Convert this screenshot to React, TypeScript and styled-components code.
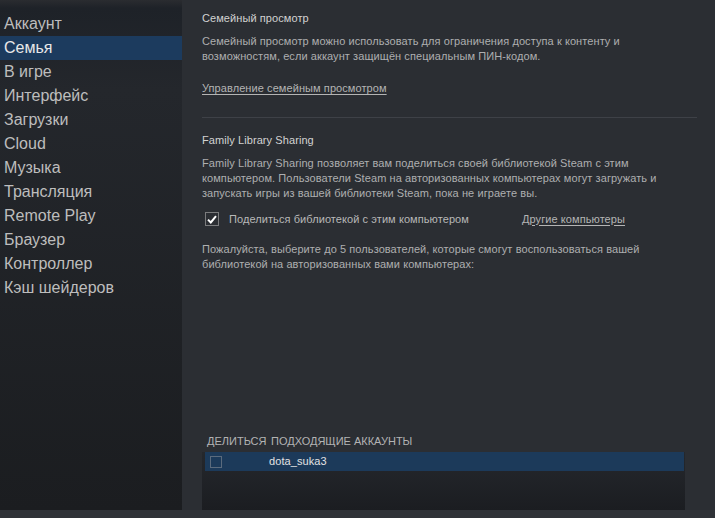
import styled, { createGlobalStyle } from 'styled-components';

const GlobalStyle = createGlobalStyle`
  html, body {
    margin: 0;
    padding: 0;
    background: #2b2e33;
    font-family: "Liberation Sans", Arial, sans-serif;
  }
`;

const Window = styled.div`
  width: 715px;
  height: 518px;
  display: flex;
  flex-direction: column;
  background: #2b2e33;
  overflow: hidden;
`;

const Body = styled.div`
  display: flex;
  height: 510px;
`;

const Footer = styled.div`
  height: 8px;
  background: #2f3237;
`;

const Sidebar = styled.nav`
  width: 182px;
  flex: 0 0 182px;
  padding-top: 12px;
  box-sizing: border-box;
  background: linear-gradient(
    to bottom,
    #2a2c30 0,
    #1e2228 8px,
    #24272c 90px,
    #1b1d20 100%
  );
`;

const NavItem = styled.div<{ $active?: boolean }>`
  height: 24px;
  line-height: 24px;
  padding-left: 4px;
  font-size: 16px;
  color: ${(p) => (p.$active ? '#e8e8e8' : '#bdbdbd')};
  background: ${(p) => (p.$active ? '#1c3b5e' : 'transparent')};
  white-space: nowrap;
`;

const Main = styled.main`
  flex: 1;
  display: flex;
  flex-direction: column;
  padding: 11px 18px 0 20px;
  box-sizing: border-box;
  font-size: 11px;
  line-height: 15px;
  letter-spacing: 0.08px;
  color: #aeafb0;
`;

const Title = styled.div`
  color: #d2d2d2;
`;

const Text = styled.p<{ $gap?: number }>`
  margin: ${(p) => p.$gap ?? 8}px 0 0;
`;

const Link = styled.a<{ $gap?: number }>`
  display: inline-block;
  margin-top: ${(p) => p.$gap ?? 0}px;
  color: #b4b4b4;
  text-decoration: underline;
  text-underline-offset: 2px;
  cursor: pointer;
`;

const Divider = styled.hr`
  border: none;
  height: 1px;
  background: #3e4147;
  margin: 21px 0 15px;
`;

const CheckRow = styled.label`
  display: grid;
  grid-template-columns: 14px 283px auto;
  column-gap: 10px;
  align-items: center;
  margin: 10px 0 0 3px;
  height: 16px;
`;

const Check = styled.span<{ $size: number; $border: string }>`
  width: ${(p) => p.$size}px;
  height: ${(p) => p.$size}px;
  box-sizing: border-box;
  border: 1px solid ${(p) => p.$border};
  display: flex;
  align-items: center;
  justify-content: center;
`;

const Label = styled.span`
  color: #b8b8b8;
`;

const TableHead = styled.div`
  margin-top: auto;
  display: grid;
  grid-template-columns: 64px 1fr;
  padding-left: 5px;
  text-transform: uppercase;
  letter-spacing: 0;
  color: #b3b3b3;
  line-height: 15px;
`;

const ListBox = styled.div`
  margin: 3px 12px 0 0;
  height: 58px;
  padding: 0 1px 0 3px;
  box-sizing: border-box;
  background: linear-gradient(to bottom, #25282d, #1b1d21);
`;

const ListRow = styled.div<{ $selected?: boolean }>`
  display: grid;
  grid-template-columns: 59px 1fr;
  align-items: center;
  height: 19px;
  padding-left: 5px;
  background: ${(p) => (p.$selected ? '#1c3a5a' : 'transparent')};
  color: #e2e2e2;
`;

const navItems = [
  'Аккаунт',
  'Семья',
  'В игре',
  'Интерфейс',
  'Загрузки',
  'Cloud',
  'Музыка',
  'Трансляция',
  'Remote Play',
  'Браузер',
  'Контроллер',
  'Кэш шейдеров',
];

export default function App() {
  return (
    <>
      <GlobalStyle />
      <Window>
        <Body>
          <Sidebar>
            {navItems.map((item) => (
              <NavItem key={item} $active={item === 'Семья'}>
                {item}
              </NavItem>
            ))}
          </Sidebar>
          <Main>
            <Title>Семейный просмотр</Title>
            <Text>
              Семейный просмотр можно использовать для ограничения доступа к контенту и
              <br />
              возможностям, если аккаунт защищён специальным ПИН-кодом.
            </Text>
            <div>
              <Link $gap={17}>Управление семейным просмотром</Link>
            </div>
            <Divider />
            <Title>Family Library Sharing</Title>
            <Text>
              Family Library Sharing позволяет вам поделиться своей библиотекой Steam с этим
              <br />
              компьютером. Пользователи Steam на авторизованных компьютерах могут загружать и
              <br />
              запускать игры из вашей библиотеки Steam, пока не играете вы.
            </Text>
            <CheckRow>
              <Check $size={14} $border="#7b7c7e">
                <svg width="10" height="9" viewBox="0 0 10 9">
                  <path
                    d="M1 4.6 L3.8 7.4 L9 1.2"
                    fill="none"
                    stroke="#ffffff"
                    strokeWidth="2"
                  />
                </svg>
              </Check>
              <Label>Поделиться библиотекой с этим компьютером</Label>
              <Link>Другие компьютеры</Link>
            </CheckRow>
            <Text $gap={15}>
              Пожалуйста, выберите до 5 пользователей, которые смогут воспользоваться вашей
              <br />
              библиотекой на авторизованных вами компьютерах:
            </Text>
            <TableHead>
              <span>Делиться</span>
              <span>Подходящие аккаунты</span>
            </TableHead>
            <ListBox>
              <ListRow $selected>
                <Check $size={12} $border="#5b6b7d" />
                <span>dota_suka3</span>
              </ListRow>
            </ListBox>
          </Main>
        </Body>
        <Footer />
      </Window>
    </>
  );
}
